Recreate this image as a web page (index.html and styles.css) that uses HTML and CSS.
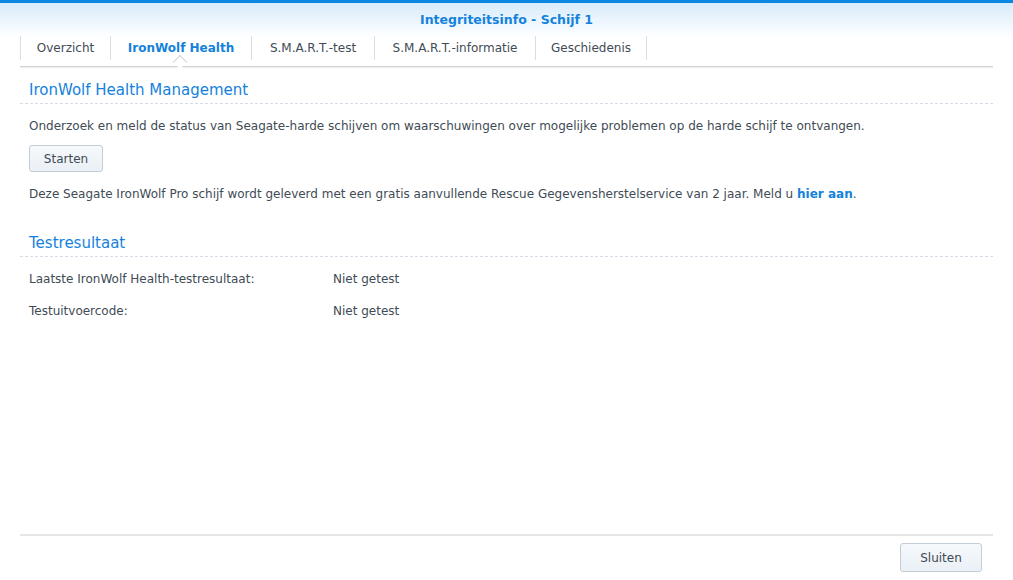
FILE: index.html
```html
<!DOCTYPE html>
<html lang="nl">
<head>
    <meta charset="UTF-8">
    <title>Integriteitsinfo - Schijf 1</title>
    <link rel="stylesheet" href="styles.css">
</head>
<body>

<div class="window">
    <div class="header">
        <div class="title">Integriteitsinfo - Schijf 1</div>
        <div class="tabs">
            <div class="tab t1">Overzicht</div>
            <div class="tab t2 active">IronWolf Health</div>
            <div class="tab t3">S.M.A.R.T.-test</div>
            <div class="tab t4">S.M.A.R.T.-informatie</div>
            <div class="tab t5">Geschiedenis</div>
        </div>
    </div>

    <div class="content">
        <div class="section-title">IronWolf Health Management</div>
        <p class="text">Onderzoek en meld de status van Seagate-harde schijven om waarschuwingen over mogelijke problemen op de harde schijf te ontvangen.</p>
        <button class="btn start">Starten</button>
        <p class="text">Deze Seagate IronWolf Pro schijf wordt geleverd met een gratis aanvullende Rescue Gegevensherstelservice van 2 jaar. Meld u <a class="link">hier aan</a>.</p>

        <div class="section-title second">Testresultaat</div>
        <div class="row">
            <span class="label">Laatste IronWolf Health-testresultaat:</span>
            <span class="value">Niet getest</span>
        </div>
        <div class="row">
            <span class="label">Testuitvoercode:</span>
            <span class="value">Niet getest</span>
        </div>
    </div>

    <div class="footer">
        <button class="btn close">Sluiten</button>
    </div>
</div>

</body>
</html>
```

FILE: styles.css
```css
* {
    box-sizing: border-box;
    margin: 0;
    padding: 0;
}

html, body {
    height: 100%;
}

body {
    font-family: "DejaVu Sans", Verdana, sans-serif;
    font-size: 12px;
    color: #414b55;
    background: #fff;
}

.window {
    height: 100%;
    display: flex;
    flex-direction: column;
    border-top: 3px solid #0a87e3;
}

.header {
    background: linear-gradient(#d7ebfa, #fff 34px);
    padding: 0 20px;
}

.title {
    height: 33px;
    line-height: 34px;
    text-align: center;
    font-weight: bold;
    font-size: 12.5px;
    color: #1482dc;
}

.tabs {
    display: flex;
    height: 31px;
    border-bottom: 1px solid #cfd3d7;
    box-shadow: 0 1px 1px rgba(0, 0, 0, 0.06);
}

.tab {
    position: relative;
    line-height: 24px;
    height: 24px;
    text-align: center;
    border-left: 1px solid #d6dee6;
    color: #414b55;
}

/* tab widths as in the original dialog */
.t1 { width: 90px; }
.t2 { width: 141px; }
.t3 { width: 123px; }
.t4 { width: 161px; }
.t5 { width: 112px; }

.tab:last-child {
    border-right: 1px solid #d6dee6;
}

.tab.active {
    font-weight: bold;
    color: #1482dc;
}

.tab.active::after {
    content: "";
    position: absolute;
    left: 50%;
    bottom: -7px;
    margin-left: -6px;
    width: 9px;
    height: 9px;
    background: #fff;
    border-left: 1px solid #cfd3d7;
    border-top: 1px solid #cfd3d7;
    transform: rotate(45deg);
}

.content {
    flex: 1;
    padding: 0 20px;
}

.section-title {
    font-size: 15px;
    color: #1482dc;
    padding: 14px 9px 4px;
    border-bottom: 1px dashed #d4dde6;
}

.section-title.second {
    padding-top: 32px;
}

.text {
    margin: 14px 9px 0;
    line-height: 16px;
}

.btn {
    font-family: inherit;
    font-size: 12px;
    color: #414b55;
    background: linear-gradient(#f6f9fc, #eaf0f6);
    border: 1px solid #c4ccd5;
    border-radius: 3px;
    height: 27px;
    cursor: pointer;
}

.start {
    margin: 11px 9px 0;
    width: 74px;
}

.link {
    color: #1482dc;
    font-weight: bold;
    text-decoration: none;
}

.row {
    display: flex;
    margin: 13px 9px 0;
    line-height: 18px;
}

.row + .row {
    margin-top: 14px;
}

.label {
    width: 304px;
}

.footer {
    margin: 0 20px;
    border-top: 2px solid #e6e6e6;
    padding: 7px 11px 8px;
    display: flex;
    justify-content: flex-end;
}

.close {
    width: 82px;
    height: 29px;
}
```
